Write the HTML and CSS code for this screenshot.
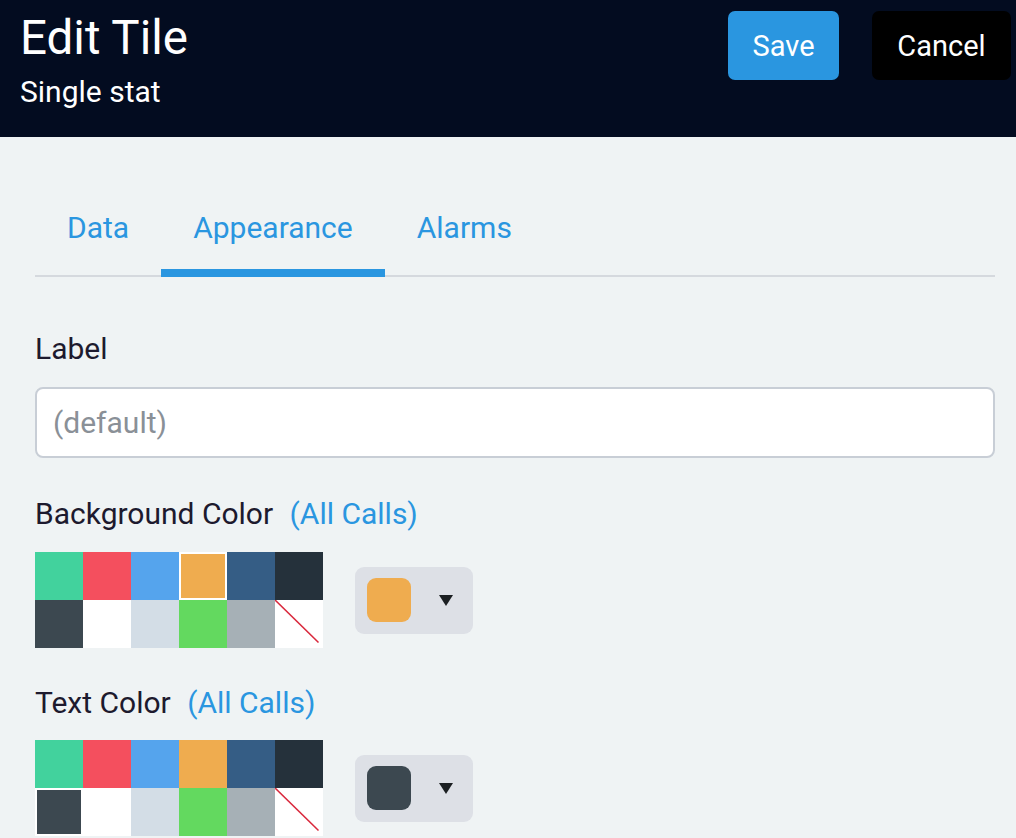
FILE: index.html
```html
<!DOCTYPE html>
<html lang="en">
<head>
<meta charset="utf-8">
<title>Edit Tile</title>
<link rel="stylesheet" href="styles.css">
</head>
<body>
<header class="topbar">
  <div class="titles">
    <h1 class="title">Edit Tile</h1>
    <div class="subtitle">Single stat</div>
  </div>
  <div class="actions">
    <button class="btn btn-save">Save</button>
    <button class="btn btn-cancel">Cancel</button>
  </div>
</header>
<main class="content">
  <nav class="tabs">
    <a class="tab">Data</a>
    <a class="tab active">Appearance</a>
    <a class="tab">Alarms</a>
  </nav>

  <section class="field field-label-input">
    <div class="field-label">Label</div>
    <input class="text-input" type="text" placeholder="(default)">
  </section>

  <section class="field field-bg">
    <div class="field-label">Background Color <span class="link">(All Calls)</span></div>
    <div class="picker-row">
      <div class="palette">
        <span class="sw c-green"></span>
        <span class="sw c-red"></span>
        <span class="sw c-blue"></span>
        <span class="sw c-orange selected"></span>
        <span class="sw c-navy"></span>
        <span class="sw c-dark"></span>
        <span class="sw c-slate"></span>
        <span class="sw c-white"></span>
        <span class="sw c-light"></span>
        <span class="sw c-lime"></span>
        <span class="sw c-gray"></span>
        <span class="sw c-none"><svg viewBox="0 0 48 48" width="48" height="48"><line x1="0" y1="0" x2="43.5" y2="42.5" stroke="#d9283c" stroke-width="1.6"/></svg></span>
      </div>
      <div class="dropdown">
        <span class="chip c-orange"></span>
        <span class="caret"></span>
      </div>
    </div>
  </section>

  <section class="field field-text">
    <div class="field-label">Text Color <span class="link">(All Calls)</span></div>
    <div class="picker-row">
      <div class="palette">
        <span class="sw c-green"></span>
        <span class="sw c-red"></span>
        <span class="sw c-blue"></span>
        <span class="sw c-orange"></span>
        <span class="sw c-navy"></span>
        <span class="sw c-dark"></span>
        <span class="sw c-slate selected"></span>
        <span class="sw c-white"></span>
        <span class="sw c-light"></span>
        <span class="sw c-lime"></span>
        <span class="sw c-gray"></span>
        <span class="sw c-none"><svg viewBox="0 0 48 48" width="48" height="48"><line x1="0" y1="0" x2="43.5" y2="42.5" stroke="#d9283c" stroke-width="1.6"/></svg></span>
      </div>
      <div class="dropdown">
        <span class="chip c-slate"></span>
        <span class="caret"></span>
      </div>
    </div>
  </section>
</main>
</body>
</html>
```
FILE: styles.css
```css
* { box-sizing: border-box; }

html, body {
  margin: 0;
  padding: 0;
}

body {
  font-family: Roboto, "Liberation Sans", Arial, sans-serif;
  background: #eff3f4;
  width: 1016px;
  height: 838px;
  overflow: hidden;
}

.topbar {
  height: 137px;
  background: #030c20;
  display: flex;
  justify-content: space-between;
  align-items: flex-start;
  padding: 10px 5px 0 20px;
}

.title {
  margin: 0;
  font-size: 47.5px;
  line-height: 56px;
  font-weight: 400;
  color: #ffffff;
}

.subtitle {
  margin-top: 8px;
  font-size: 30px;
  line-height: 36px;
  color: #ffffff;
}

.actions {
  display: flex;
  gap: 33px;
  margin-top: 1px;
}

.btn {
  height: 69px;
  border: none;
  border-radius: 7px;
  font-family: inherit;
  font-size: 29px;
  color: #ffffff;
  padding: 0;
}

.btn-save {
  width: 111px;
  background: #2a96e0;
}

.btn-cancel {
  width: 139px;
  background: #000000;
}

.content {
  padding: 73px 21px 0 35px;
}

.tabs {
  display: flex;
  border-bottom: 2px solid #d5d9de;
}

.tab {
  display: block;
  padding: 0 32px 23px;
  font-size: 30px;
  line-height: 36px;
  color: #2a96e0;
  border-bottom: 8px solid transparent;
  margin-bottom: -2px;
}

.tab.active {
  border-bottom-color: #2a96e0;
}

.field-label {
  font-size: 30px;
  line-height: 36px;
  color: #1d1a2e;
}

.link {
  color: #2a96e0;
  margin-left: 9px;
}

.field-label-input {
  margin-top: 54px;
}

.text-input {
  display: block;
  width: 100%;
  height: 71px;
  margin-top: 20px;
  border: 2px solid #c8ced6;
  border-radius: 8px;
  background: #ffffff;
  padding: 0 16px;
  font-family: inherit;
  font-size: 30px;
  color: #1d1a2e;
  outline: none;
}

.text-input::placeholder {
  color: #8a9097;
}

.field-bg {
  margin-top: 38px;
}

.field-text {
  margin-top: 37px;
}

.picker-row {
  display: flex;
  align-items: center;
  gap: 32px;
  margin-top: 20px;
}

.field-text .picker-row {
  margin-top: 19px;
}

.palette {
  display: grid;
  grid-template-columns: repeat(6, 48px);
  grid-template-rows: repeat(2, 48px);
}

.sw {
  display: block;
  width: 48px;
  height: 48px;
}

.sw svg {
  display: block;
}

.sw.selected {
  box-shadow: inset 0 0 0 2px #ffffff;
}

.c-green { background: #42d29d; }
.c-red { background: #f44f5e; }
.c-blue { background: #55a4ed; }
.c-orange { background: #efac4f; }
.c-navy { background: #355d85; }
.c-dark { background: #25313b; }
.c-slate { background: #3c4850; }
.c-white { background: #ffffff; }
.c-light { background: #d3dde6; }
.c-lime { background: #63d95f; }
.c-gray { background: #a6b0b6; }
.c-none { background: #ffffff; }

.dropdown {
  display: flex;
  align-items: center;
  width: 118px;
  height: 67px;
  padding-left: 12px;
  background: #dde0e6;
  border-radius: 9px;
}

.chip {
  display: block;
  width: 44px;
  height: 44px;
  border-radius: 9px;
}

.caret {
  display: block;
  width: 0;
  height: 0;
  margin-left: 28px;
  border-left: 7.5px solid transparent;
  border-right: 7.5px solid transparent;
  border-top: 11px solid #1b1f22;
}
```
